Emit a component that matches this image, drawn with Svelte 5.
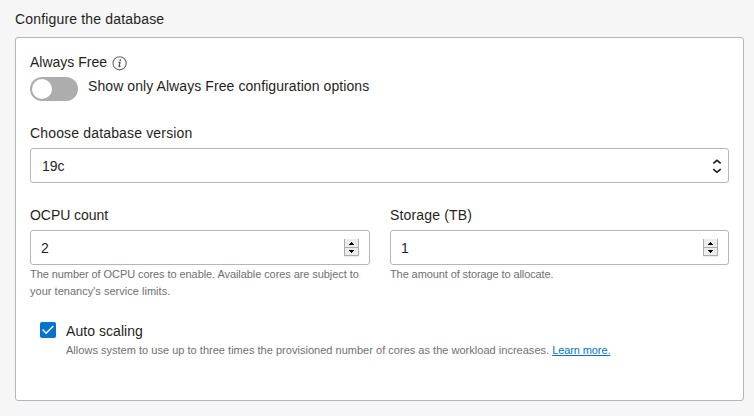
<script>
  let version = '19c';
  const fields = [
    { label: 'OCPU count', value: 2, help: ["The number of OCPU cores to enable. Available cores are subject to", "your tenancy's service limits."], cls: 'ocpu' },
    { label: 'Storage (TB)', value: 1, help: ['The amount of storage to allocate.'], cls: 'storage' }
  ];
</script>

<main class="page">
  <h2 class="title">Configure the database</h2>
  <section class="panel">
    <div class="label-row">
      <span>Always Free</span>
      <svg class="info" width="16" height="16" viewBox="0 0 16 16">
        <circle cx="7.6" cy="8.3" r="6.6" fill="none" stroke="#66676a" stroke-width="1.1" />
        <circle cx="8.3" cy="5.1" r="0.9" fill="#4a4b4e" />
        <path d="M6.5 7.3h1.5l-.9 3.8q-.1.6.5.4l.8-.5" fill="none" stroke="#4a4b4e" stroke-width="1.2" />
      </svg>
    </div>
    <div class="toggle-row">
      <div class="toggle"><div class="knob"></div></div>
      <span class="show">Show only Always Free configuration options</span>
    </div>

    <div class="version">Choose database version</div>
    <div class="box select">
      <span class="value">{version}</span>
      <svg width="10" height="16" viewBox="0 0 10 16" fill="none" stroke="#17181a" stroke-width="1.6">
        <path d="M1.3 5.4 5 2.3 8.7 5.4M1.3 11.2 5 14.3 8.7 11.2" />
      </svg>
    </div>

    <div class="columns">
      {#each fields as f}
        <div class="field {f.cls}">
          <div class="name">{f.label}</div>
          <div class="box number">
            <span class="value">{f.value}</span>
            <svg class="spin" width="15" height="18" viewBox="0 0 15 18" shape-rendering="crispEdges">
              <rect width="15" height="18" fill="#ececec" />
              <path d="M.5 0v16.5h14V0M0 8.5h15" fill="none" stroke="#adadad" />
              <path d="M7 3h1v1h1v1h1v1H5V5h1V4h1zM5 11h5v1H9v1H8v1H7v-1H6v-1H5z" fill="#000" />
            </svg>
          </div>
          {#each f.help as line}
            <div class="help">{line}</div>
          {/each}
        </div>
      {/each}
    </div>

    <div class="auto">
      <svg class="check" width="16" height="16" viewBox="0 0 16 16">
        <rect width="16" height="16" rx="2" fill="#0572ce" />
        <path d="M2.6 7.6 6.1 11.2 13.3 4" fill="none" stroke="#fff" stroke-width="1.4" />
      </svg>
      <div>
        <div class="scaling">Auto scaling</div>
        <div class="help auto-help">Allows system to use up to three times the provisioned number of cores as the workload increases. <a href="#learn">Learn more.</a></div>
      </div>
    </div>
  </section>
</main>

<style>
  :global(body) { margin: 0; background: #f6f6f6; }
  .page {
    box-sizing: border-box;
    width: 754px;
    height: 416px;
    padding: 9px 10px 0 15px;
    overflow: hidden;
    background: #f6f6f6;
    font: 14px/20px "Liberation Sans", Arial, sans-serif;
    color: #1f1f21;
    white-space: nowrap;
  }
  .title { margin: 0 0 8px; font-size: 14px; font-weight: 400; line-height: 20px; letter-spacing: .17px; }
  .panel {
    box-sizing: border-box;
    height: 364px;
    padding: 14px;
    border: 1px solid #b2b6be;
    border-radius: 3px;
    background: #fff;
  }
  .label-row { display: flex; height: 20px; gap: 5px; }
  .info { margin-top: 3px; }
  .toggle-row { display: flex; gap: 10px; height: 25px; margin-top: 4px; }
  .show { letter-spacing: .08px; }
  .toggle {
    box-sizing: border-box;
    width: 48px;
    height: 24px;
    margin-top: 1px;
    padding: 2px;
    border-radius: 12px;
    background: #adadad;
  }
  .knob { width: 20px; height: 20px; border-radius: 50%; background: #fff; }
  .version { margin-top: 22px; letter-spacing: .16px; }
  .box {
    box-sizing: border-box;
    display: flex;
    align-items: center;
    justify-content: space-between;
    height: 35px;
    margin-top: 5px;
    border: 1px solid #b2b6be;
    border-radius: 3px;
    padding: 0 11px;
  }
  .select { padding-right: 6px; }
  .value { padding-top: 1px; }
  .columns { display: flex; gap: 20px; height: 95px; margin-top: 22px; }
  .field { width: 340px; }
  .storage { width: 339px; }
  .ocpu .name { letter-spacing: -.06px; }
  .storage .name { letter-spacing: .17px; }
  .number { padding: 0 10px; }
  .spin { margin-top: 1px; }
  .help { font-size: 11px; line-height: 17px; color: #6f7073; }
  .field .help { position: relative; top: 1px; letter-spacing: -.075px; }
  .field .help + .help { letter-spacing: .02px; }
  .storage .help { letter-spacing: -.1px; }
  .auto { display: flex; gap: 10px; margin: 21px 0 0 10px; }
  .check { margin-top: 1px; }
  .scaling { letter-spacing: .05px; }
  .auto-help { margin-top: 1px; letter-spacing: .02px; }
  a { color: #0572ce; text-decoration: underline; letter-spacing: -.1px; }
</style>
